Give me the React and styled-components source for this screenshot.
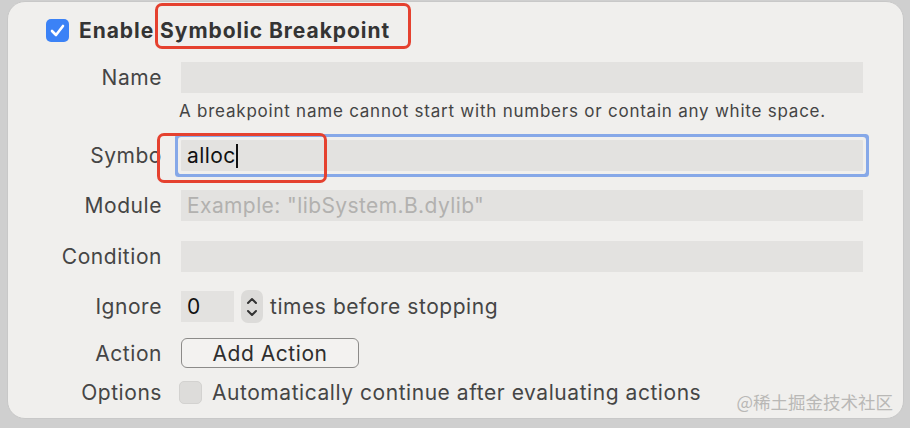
import React from 'react';
import styled, { createGlobalStyle } from 'styled-components';

const GlobalStyle = createGlobalStyle`
  html, body {
    margin: 0;
    padding: 0;
    background: #cfcfcf;
  }
  body {
    font-family: Inter, "Noto Sans", "Liberation Sans", sans-serif;
  }
`;

const Page = styled.div`
  width: 910px;
  height: 428px;
  box-sizing: border-box;
  padding: 1px 6px 9px 7px;
  background: #cfcfcf;
`;

const Panel = styled.div`
  position: relative;
  height: 100%;
  box-sizing: border-box;
  background: #f0efed;
  border: 1px solid #c8c8c8;
  border-radius: 18px;
  padding: 17px 40px 0 0;
  display: flex;
  flex-direction: column;
`;

const Header = styled.div`
  display: flex;
  align-items: center;
  gap: 10px;
  padding-left: 38px;
  height: 23px;
`;

const CheckBox = styled.div`
  width: 23px;
  height: 23px;
  border-radius: 5px;
  box-sizing: border-box;
  flex: none;
  display: flex;
  align-items: center;
  justify-content: center;
  background: ${(p) => (p.checked ? '#3b82f6' : '#dddcda')};
  border: ${(p) => (p.checked ? 'none' : '1px solid #d3d2d0')};
`;

const Title = styled.div`
  font-size: 21px;
  font-weight: 700;
  color: #343434;
  letter-spacing: 0.95px;
`;

const Row = styled.div`
  display: grid;
  grid-template-columns: 154px 1fr;
  column-gap: 19px;
  align-items: center;
  margin-top: ${(p) => p.mt || 0}px;
`;

const Label = styled.div`
  text-align: right;
  font-size: 21px;
  letter-spacing: 0.55px;
  color: #454545;
  white-space: nowrap;
`;

const Field = styled.div`
  height: 31px;
  background: #e3e2e0;
  box-sizing: border-box;
  padding-left: 6px;
  display: flex;
  align-items: center;
  font-size: 21px;
  letter-spacing: 0.4px;
  color: ${(p) => (p.placeholder ? '#b2b1af' : '#111')};
  ${(p) =>
    p.focused &&
    `
    box-shadow: 0 0 0 3px #f0efed, 0 0 0 6px #86a8e8;
    border-radius: 1px;
  `}
`;

const Caret = styled.span`
  display: inline-block;
  width: 2px;
  height: 24px;
  background: #111;
`;

const Help = styled.div`
  grid-column: 2;
  font-size: 17px;
  line-height: 20px;
  color: #444;
  margin-left: -2px;
  letter-spacing: 0.77px;
  white-space: nowrap;
`;

const Inline = styled.div`
  display: flex;
  align-items: center;
  gap: ${(p) => p.gap || 8}px;
`;

const SmallField = styled(Field)`
  width: 53px;
`;

const Stepper = styled.div`
  width: 22px;
  height: 33px;
  border-radius: 7px;
  background: #dcdbd9;
  display: flex;
  align-items: center;
  justify-content: center;
`;

const Text = styled.span`
  font-size: 21px;
  letter-spacing: 0.55px;
  color: #454545;
  white-space: nowrap;
`;

const Button = styled.div`
  width: 178px;
  height: 30px;
  box-sizing: border-box;
  border: 1.5px solid #8c8b89;
  border-radius: 6px;
  background: #f3f2f0;
  display: flex;
  align-items: center;
  justify-content: center;
  font-size: 21px;
  letter-spacing: 0.55px;
  color: #2e2e2e;
`;

const Annotation = styled.div`
  position: absolute;
  left: ${(p) => p.x}px;
  top: ${(p) => p.y}px;
  width: ${(p) => p.w}px;
  height: ${(p) => p.h}px;
  box-sizing: border-box;
  border: 3.5px solid #e5412f;
  border-radius: 7px;
  pointer-events: none;
`;

const Watermark = styled.div`
  position: absolute;
  right: 10px;
  bottom: 4px;
  font-family: "Noto Sans CJK SC", "Noto Sans", sans-serif;
  font-size: 17.5px;
  color: #b9b8b6;
`;

const Check = () => (
  <svg width="15" height="13" viewBox="0 0 15 13">
    <path d="M2 7 L6 11 L13 2" fill="none" stroke="#fff" strokeWidth="2.6" strokeLinecap="round" strokeLinejoin="round" />
  </svg>
);

const Chevrons = () => (
  <svg width="14" height="26" viewBox="0 0 14 26">
    <path d="M3 9 L7 5 L11 9" fill="none" stroke="#333" strokeWidth="2" strokeLinecap="round" strokeLinejoin="round" />
    <path d="M3 17 L7 21 L11 17" fill="none" stroke="#333" strokeWidth="2" strokeLinecap="round" strokeLinejoin="round" />
  </svg>
);

export default function App() {
  return (
    <Page>
      <GlobalStyle />
      <Panel>
        <Header>
          <CheckBox checked>
            <Check />
          </CheckBox>
          <Title>Enable Symbolic Breakpoint</Title>
        </Header>

        <Row mt={20}>
          <Label>Name</Label>
          <Field />
        </Row>
        <Row mt={8}>
          <Help>A breakpoint name cannot start with numbers or contain any white space.</Help>
        </Row>
        <Row mt={19}>
          <Label>Symbo</Label>
          <Field focused>
            alloc
            <Caret />
          </Field>
        </Row>
        <Row mt={19}>
          <Label>Module</Label>
          <Field placeholder="true">Example: "libSystem.B.dylib"</Field>
        </Row>
        <Row mt={20}>
          <Label>Condition</Label>
          <Field />
        </Row>
        <Row mt={18}>
          <Label>Ignore</Label>
          <Inline gap={7}>
            <SmallField>0</SmallField>
            <Stepper>
              <Chevrons />
            </Stepper>
            <Text>times before stopping</Text>
          </Inline>
        </Row>
        <Row mt={15}>
          <Label>Action</Label>
          <Inline>
            <Button>Add Action</Button>
          </Inline>
        </Row>
        <Row mt={12}>
          <Label>Options</Label>
          <Inline gap={10}>
            <CheckBox style={{ marginLeft: -2 }} />
            <Text>Automatically continue after evaluating actions</Text>
          </Inline>
        </Row>

        <Annotation x={147} y={1} w={256} h={46} />
        <Annotation x={149} y={131} w={170} h={50} />
        <Watermark>@稀土掘金技术社区</Watermark>
      </Panel>
    </Page>
  );
}
